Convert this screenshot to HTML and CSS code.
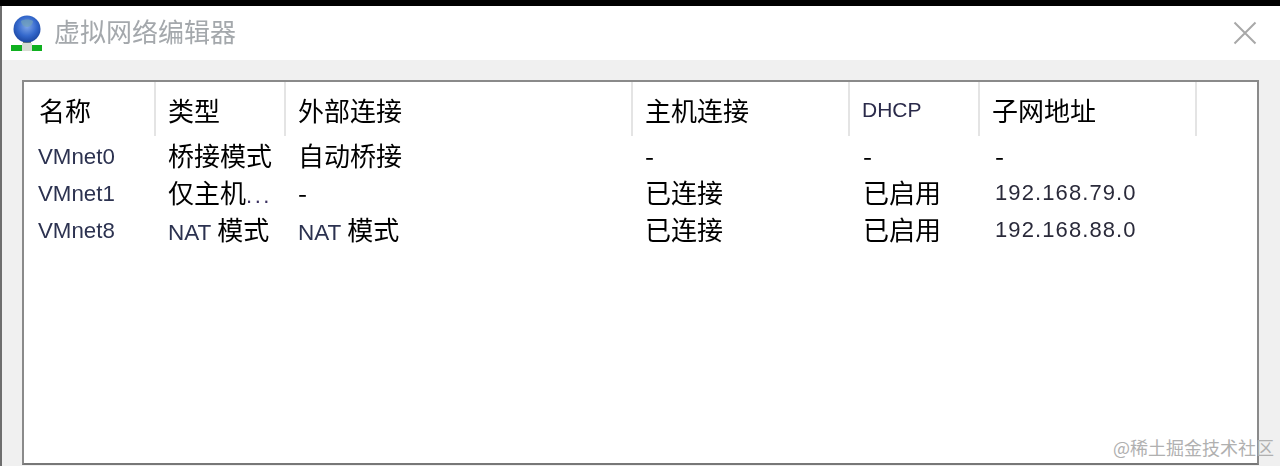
FILE: index.html
```html
<!DOCTYPE html>
<html lang="zh">
<head>
<meta charset="utf-8">
<title>虚拟网络编辑器</title>
<link rel="stylesheet" href="styles.css">
</head>
<body>
<div class="window">
  <header class="titlebar">
    <svg class="app-icon" width="34" height="38" viewBox="0 0 34 38">
      <defs>
        <radialGradient id="globe" cx="0.5" cy="0.4" r="0.65">
          <stop offset="0" stop-color="#7fa6e8"/>
          <stop offset="0.55" stop-color="#3468cc"/>
          <stop offset="1" stop-color="#163f98"/>
        </radialGradient>
      </defs>
      <rect x="13" y="22" width="8" height="8" fill="#7c8a70"/>
      <circle cx="17" cy="14" r="13.5" fill="url(#globe)"/>
      <path d="M11 6c3-2 9-2 12 0 0 3-3 6-6 6s-6-3-6-6z" fill="#6fa0b8" opacity=".7"/>
      <rect x="1" y="30" width="31" height="6" fill="#10b020"/>
      <rect x="12" y="28" width="10" height="8" fill="#d8dcd4"/>
    </svg>
    <span class="title">虚拟网络编辑器</span>
    <svg class="close" width="24" height="24" viewBox="0 0 24 24">
      <path d="M1.5 1.5l21 21M22.5 1.5l-21 21" stroke="#a8a8a8" stroke-width="2" fill="none"/>
    </svg>
  </header>
  <main class="content">
    <div class="list">
      <div class="head">
        <div class="hcell c1">名称</div>
        <div class="hcell c2">类型</div>
        <div class="hcell c3">外部连接</div>
        <div class="hcell c4">主机连接</div>
        <div class="hcell c5 small">DHCP</div>
        <div class="hcell c6">子网地址</div>
      </div>
      <div class="row">
        <div class="cell c1 latin">VMnet0</div>
        <div class="cell c2">桥接模式</div>
        <div class="cell c3">自动桥接</div>
        <div class="cell c4">-</div>
        <div class="cell c5">-</div>
        <div class="cell c6">-</div>
      </div>
      <div class="row">
        <div class="cell c1 latin">VMnet1</div>
        <div class="cell c2">仅主机<span class="dots">...</span></div>
        <div class="cell c3">-</div>
        <div class="cell c4">已连接</div>
        <div class="cell c5">已启用</div>
        <div class="cell c6 ip">192.168.79.0</div>
      </div>
      <div class="row">
        <div class="cell c1 latin">VMnet8</div>
        <div class="cell c2"><span class="nat">NAT</span> 模式</div>
        <div class="cell c3"><span class="nat">NAT</span> 模式</div>
        <div class="cell c4">已连接</div>
        <div class="cell c5">已启用</div>
        <div class="cell c6 ip">192.168.88.0</div>
      </div>
    </div>
    <div class="watermark">@稀土掘金技术社区</div>
  </main>
</div>
</body>
</html>
```
FILE: styles.css
```css
* { box-sizing: border-box; }
html, body { margin: 0; padding: 0; }
body {
  width: 1280px;
  height: 466px;
  overflow: hidden;
  background: #000;
  font-family: "Liberation Sans", "Noto Sans CJK SC", sans-serif;
  color: #1a1a1a;
}
.window {
  margin-top: 6px;
  height: 460px;
  border-left: 2px solid #6e6e6e;
  display: flex;
  flex-direction: column;
  background: #f0f0f0;
}
.titlebar {
  height: 54px;
  flex: none;
  background: #fff;
  display: flex;
  align-items: center;
  padding: 0 23px 0 8px;
}
.app-icon { flex: none; margin-top: 2px; }
.title {
  margin-left: 10px;
  margin-bottom: 6px;
  font-size: 26px;
  color: #a4a8ac;
  font-family: "Noto Sans CJK SC", sans-serif;
  filter: blur(0.5px);
}
.close { margin-left: auto; }
.content {
  position: relative;
  flex: 1;
  padding: 20px 21px 0 20px;
}
.list {
  height: 385px;
  background: #fff;
  border: 2px solid #8a8a8a;
  border-bottom-color: #777;
}
.head, .row {
  display: grid;
  grid-template-columns: 132px 130px 347px 217px 130px 217px;
  filter: blur(0.4px);
}
.head { height: 54px; }
.hcell {
  border-right: 2px solid #e4e4e4;
  padding-left: 12px;
  font-size: 26px;
  line-height: 56px;
  height: 54px;
  font-family: "Noto Sans CJK SC", sans-serif;
  color: #000;
}
.hcell.c1 { padding-left: 15px; }
.hcell.c5 { padding-left: 12px; }
.small {
  font-family: "Liberation Sans", sans-serif;
  font-size: 21px;
  color: #2a2a4a;
}
.row { height: 37px; font-size: 26px; line-height: 37px; }
.cell {
  padding-left: 12px;
  white-space: nowrap;
  font-family: "Noto Sans CJK SC", sans-serif;
  color: #000;
}
.cell.c1 { padding-left: 14px; }
.cell.c2 { padding-left: 12px; }
.cell.c5 { padding-left: 13px; }
.cell.c6 { padding-left: 15px; }
.cell.latin { font-family: "Liberation Sans", sans-serif; font-size: 22.3px; color: #2c3250; padding-top: 2px; }
.nat { font-family: "Liberation Sans", sans-serif; font-size: 22.5px; color: #2c3250; }
.dots { font-family: "Liberation Sans", sans-serif; font-size: 22px; letter-spacing: 2.5px; color: #3a3060; }
.cell.ip { font-family: "Liberation Sans", sans-serif; font-size: 22px; letter-spacing: 1.1px; color: #2a2a3a; padding-top: 1px; }
.watermark {
  position: absolute;
  right: 6px;
  bottom: 6px;
  font-size: 18px;
  line-height: 26px;
  color: #b0b0b0;
  font-family: "Noto Sans CJK SC", sans-serif;
}
```
